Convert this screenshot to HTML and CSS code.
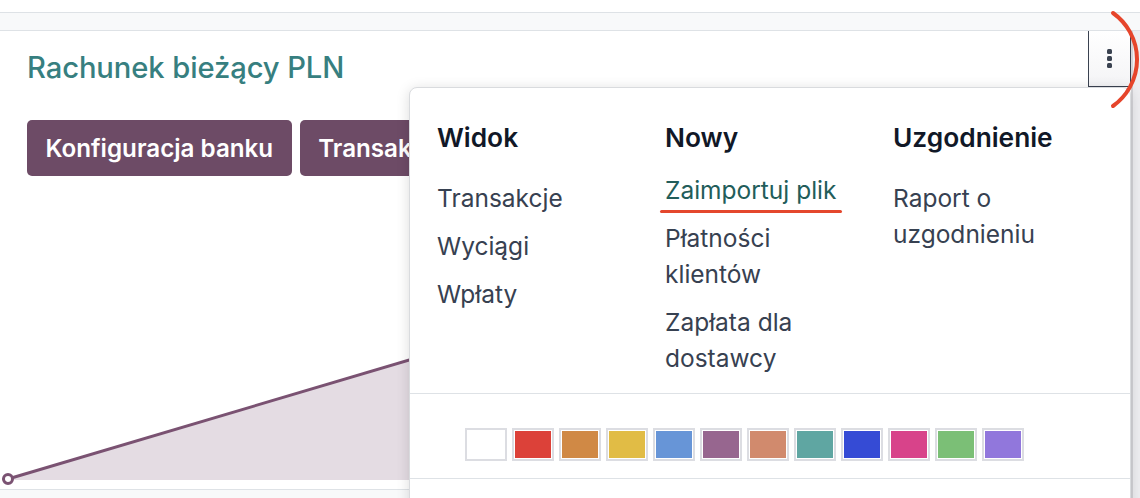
FILE: index.html
```html
<!DOCTYPE html>
<html lang="pl">
<head>
<meta charset="utf-8">
<title>Rachunek bieżący PLN</title>
<link rel="stylesheet" href="styles.css">
</head>
<body>
<div class="page">
  <div class="topgap"></div>
  <div class="strip"></div>
  <div class="main">
    <div class="card">
      <div class="card-head">
        <h2 class="title">Rachunek bieżący PLN</h2>
        <button class="kebab" aria-label="Więcej"><span></span><span></span><span></span></button>
      </div>
      <div class="actions">
        <button class="btn">Konfiguracja banku</button>
        <button class="btn">Transakcje</button>
      </div>
      <svg class="chart" width="1131" height="299" viewBox="0 0 1131 299">
        <polygon class="area" points="8,299 8,298 1131,-35 1131,299"></polygon>
        <line class="trend" x1="8" y1="298" x2="1131" y2="-35"></line>
        <circle class="dot" cx="8" cy="298" r="4.5"></circle>
      </svg>
    </div>
    <div class="side"></div>
  </div>
  <div class="dropdown">
    <div class="menu-grid">
      <div class="col">
        <h3 class="col-title">Widok</h3>
        <div class="list">
          <div class="item">Transakcje</div>
          <div class="item">Wyciągi</div>
          <div class="item">Wpłaty</div>
        </div>
      </div>
      <div class="col">
        <h3 class="col-title">Nowy</h3>
        <div class="list list-up">
          <div class="item item-link marked">Zaimportuj plik</div>
          <div class="item">Płatności<br>klientów</div>
          <div class="item">Zapłata dla<br>dostawcy</div>
        </div>
      </div>
      <div class="col">
        <h3 class="col-title">Uzgodnienie</h3>
        <div class="list">
          <div class="item">Raport o<br>uzgodnieniu</div>
        </div>
      </div>
    </div>
    <div class="swatches">
      <span class="swatch" style="background-color:#ffffff"></span>
      <span class="swatch" style="background-color:#dc4139"></span>
      <span class="swatch" style="background-color:#d08945"></span>
      <span class="swatch" style="background-color:#e1bc45"></span>
      <span class="swatch" style="background-color:#6795d7"></span>
      <span class="swatch" style="background-color:#97668f"></span>
      <span class="swatch" style="background-color:#d18a6d"></span>
      <span class="swatch" style="background-color:#5fa6a2"></span>
      <span class="swatch" style="background-color:#354bd5"></span>
      <span class="swatch" style="background-color:#d8438a"></span>
      <span class="swatch" style="background-color:#7bbf76"></span>
      <span class="swatch" style="background-color:#9177dc"></span>
    </div>
    <div class="menu-foot"></div>
  </div>
  <svg class="annot" width="60" height="120" viewBox="1080 0 60 120">
    <path d="M1113 13 A57 57 0 0 1 1113 106" />
  </svg>
</div>
</body>
</html>
```

FILE: styles.css
```css
* { box-sizing: border-box; }
html, body { margin: 0; padding: 0; }
body {
  width: 1140px;
  height: 498px;
  overflow: hidden;
  background: #ffffff;
  font-family: Inter, "Noto Sans", "Liberation Sans", sans-serif;
}
.page {
  position: relative;
  width: 1140px;
  height: 498px;
  overflow: hidden;
}
.topgap { height: 12px; background: #ffffff; }
.strip {
  height: 19px;
  background: #f8f9fa;
  border-top: 1px solid #dee2e6;
  border-bottom: 1px solid #dee2e6;
}
.main {
  display: flex;
  height: 467px;
  background: #f8f9fa;
}
.card {
  flex: 0 0 1131px;
  height: 459px;
  background: #ffffff;
  border-bottom: 1px solid #dee2e6;
  display: flex;
  flex-direction: column;
  padding-bottom: 9px;
}
.side {
  flex: 1;
  background: #eeeef1;
  border-left: 2px solid #d4d4d8;
}
.card-head {
  display: flex;
  justify-content: space-between;
  align-items: flex-start;
  padding-left: 27px;
}
.title {
  margin: 19px 0 0;
  font-size: 29.2px;
  line-height: 36px;
  font-weight: 500;
  color: #377f80;
  letter-spacing: -0.1px;
}
.kebab {
  width: 43px;
  height: 56px;
  margin: 0;
  padding: 0;
  border: 1px solid #3a4250;
  border-top: none;
  background: linear-gradient(#ffffff, #f4f4f6);
  display: flex;
  flex-direction: column;
  align-items: center;
  padding-top: 18px;
  gap: 2px;
}
.kebab span {
  width: 5px;
  height: 5px;
  border-radius: 1.5px;
  background: #3a4250;
}
.actions {
  display: flex;
  gap: 8px;
  padding-left: 27px;
  margin-top: 33px;
}
.btn {
  height: 56px;
  padding: 0 18.5px;
  border: none;
  border-radius: 5px;
  background: #6d4b66;
  color: #ffffff;
  font-family: inherit;
  font-size: 24.2px;
  font-weight: 600;
  white-space: nowrap;
}
.chart {
  display: block;
  margin-top: auto;
  overflow: visible;
}
.chart .area { fill: #e4dce3; }
.chart .trend { stroke: #7a5272; stroke-width: 3; }
.chart .dot { fill: #ffffff; stroke: #7a5272; stroke-width: 3; }

.dropdown {
  position: absolute;
  left: 409px;
  top: 87px;
  width: 722px;
  height: 440px;
  background: #ffffff;
  border: 1px solid #d9dbde;
  border-radius: 8px;
  box-shadow: 0 2px 14px rgba(0, 0, 0, 0.14);
}
.menu-grid {
  display: grid;
  grid-template-columns: repeat(3, 228px);
  padding: 32px 27px 11px;
}
.col-title {
  margin: 0 0 18px;
  font-size: 26.3px;
  line-height: 36px;
  font-weight: 600;
  color: #111827;
}
.list-up { margin-top: -8px; }
.item {
  padding: 6px 0;
  font-size: 24.5px;
  line-height: 36px;
  color: #374151;
}
.item-link { color: #225d5a; }
.marked { position: relative; }
.marked::after {
  content: "";
  position: absolute;
  left: -5px;
  width: 182px;
  top: 44px;
  height: 3px;
  border-radius: 2px;
  background: #e4472d;
}
.swatches {
  display: flex;
  gap: 5px;
  padding: 34px 55px 17px;
  border-top: 1px solid #dee2e6;
  border-bottom: 1px solid #dee2e6;
}
.swatch {
  width: 42px;
  height: 33px;
  border: 2px solid #dcdde2;
  padding: 1px;
  background-clip: content-box;
}
.annot {
  position: absolute;
  left: 1080px;
  top: 0;
  overflow: visible;
}
.annot path {
  fill: none;
  stroke: #e6452b;
  stroke-width: 4;
  stroke-linecap: round;
}
```
